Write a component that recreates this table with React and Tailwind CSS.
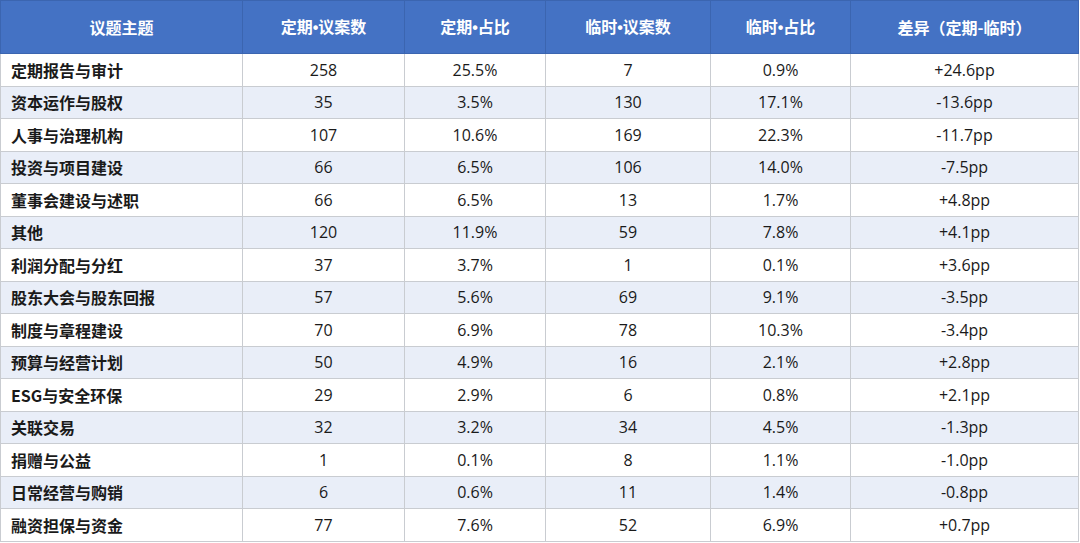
const rows = [
  ["定期报告与审计", "258", "25.5%", "7", "0.9%", "+24.6pp"],
  ["资本运作与股权", "35", "3.5%", "130", "17.1%", "-13.6pp"],
  ["人事与治理机构", "107", "10.6%", "169", "22.3%", "-11.7pp"],
  ["投资与项目建设", "66", "6.5%", "106", "14.0%", "-7.5pp"],
  ["董事会建设与述职", "66", "6.5%", "13", "1.7%", "+4.8pp"],
  ["其他", "120", "11.9%", "59", "7.8%", "+4.1pp"],
  ["利润分配与分红", "37", "3.7%", "1", "0.1%", "+3.6pp"],
  ["股东大会与股东回报", "57", "5.6%", "69", "9.1%", "-3.5pp"],
  ["制度与章程建设", "70", "6.9%", "78", "10.3%", "-3.4pp"],
  ["预算与经营计划", "50", "4.9%", "16", "2.1%", "+2.8pp"],
  ["ESG与安全环保", "29", "2.9%", "6", "0.8%", "+2.1pp"],
  ["关联交易", "32", "3.2%", "34", "4.5%", "-1.3pp"],
  ["捐赠与公益", "1", "0.1%", "8", "1.1%", "-1.0pp"],
  ["日常经营与购销", "6", "0.6%", "11", "1.4%", "-0.8pp"],
  ["融资担保与资金", "77", "7.6%", "52", "6.9%", "+0.7pp"],
];

// header labels split at the bullet so the dot can use a narrow latin glyph
const headers = [
  ["议题主题"],
  ["定期", "议案数"],
  ["定期", "占比"],
  ["临时", "议案数"],
  ["临时", "占比"],
  ["差异（定期-临时）"],
];

export default function App() {
  return (
    <div className="w-[1080px] h-[543px] bg-white overflow-hidden">
      <table className="w-[1079px] table-fixed border-collapse font-['Open_Sans','Noto_Sans_CJK_SC',sans-serif] text-[16px] text-[#1a1a1a]">
        <colgroup>
          <col className="w-[242px]" />
          <col className="w-[162px]" />
          <col className="w-[141px]" />
          <col className="w-[165px]" />
          <col className="w-[140px]" />
          <col />
        </colgroup>
        <thead>
          <tr className="h-[53px] bg-[#4472c4]">
            {headers.map((h) => (
              <th
                key={h.join("")}
                className="border border-[#3b65b0] text-white font-bold text-[16px] text-center font-['Noto_Sans_CJK_SC',sans-serif]"
              >
                {h[0]}
                {h[1] && (
                  <>
                    <span className="font-['Liberation_Sans',sans-serif]">•</span>
                    {h[1]}
                  </>
                )}
              </th>
            ))}
          </tr>
        </thead>
        <tbody>
          {rows.map((r, i) => (
            <tr key={r[0]} className={i % 2 === 0 ? "h-[32.5px] bg-white" : "h-[32.5px] bg-[#e9eef8]"}>
              <td className="border border-[#c9ccd1] pl-[10px] font-bold font-['Noto_Sans_CJK_SC',sans-serif] leading-none">
                {r[0]}
              </td>
              {r.slice(1).map((c, j) => (
                <td key={j} className="border border-[#c9ccd1] text-center leading-none">
                  {c}
                </td>
              ))}
            </tr>
          ))}
        </tbody>
      </table>
    </div>
  );
}
